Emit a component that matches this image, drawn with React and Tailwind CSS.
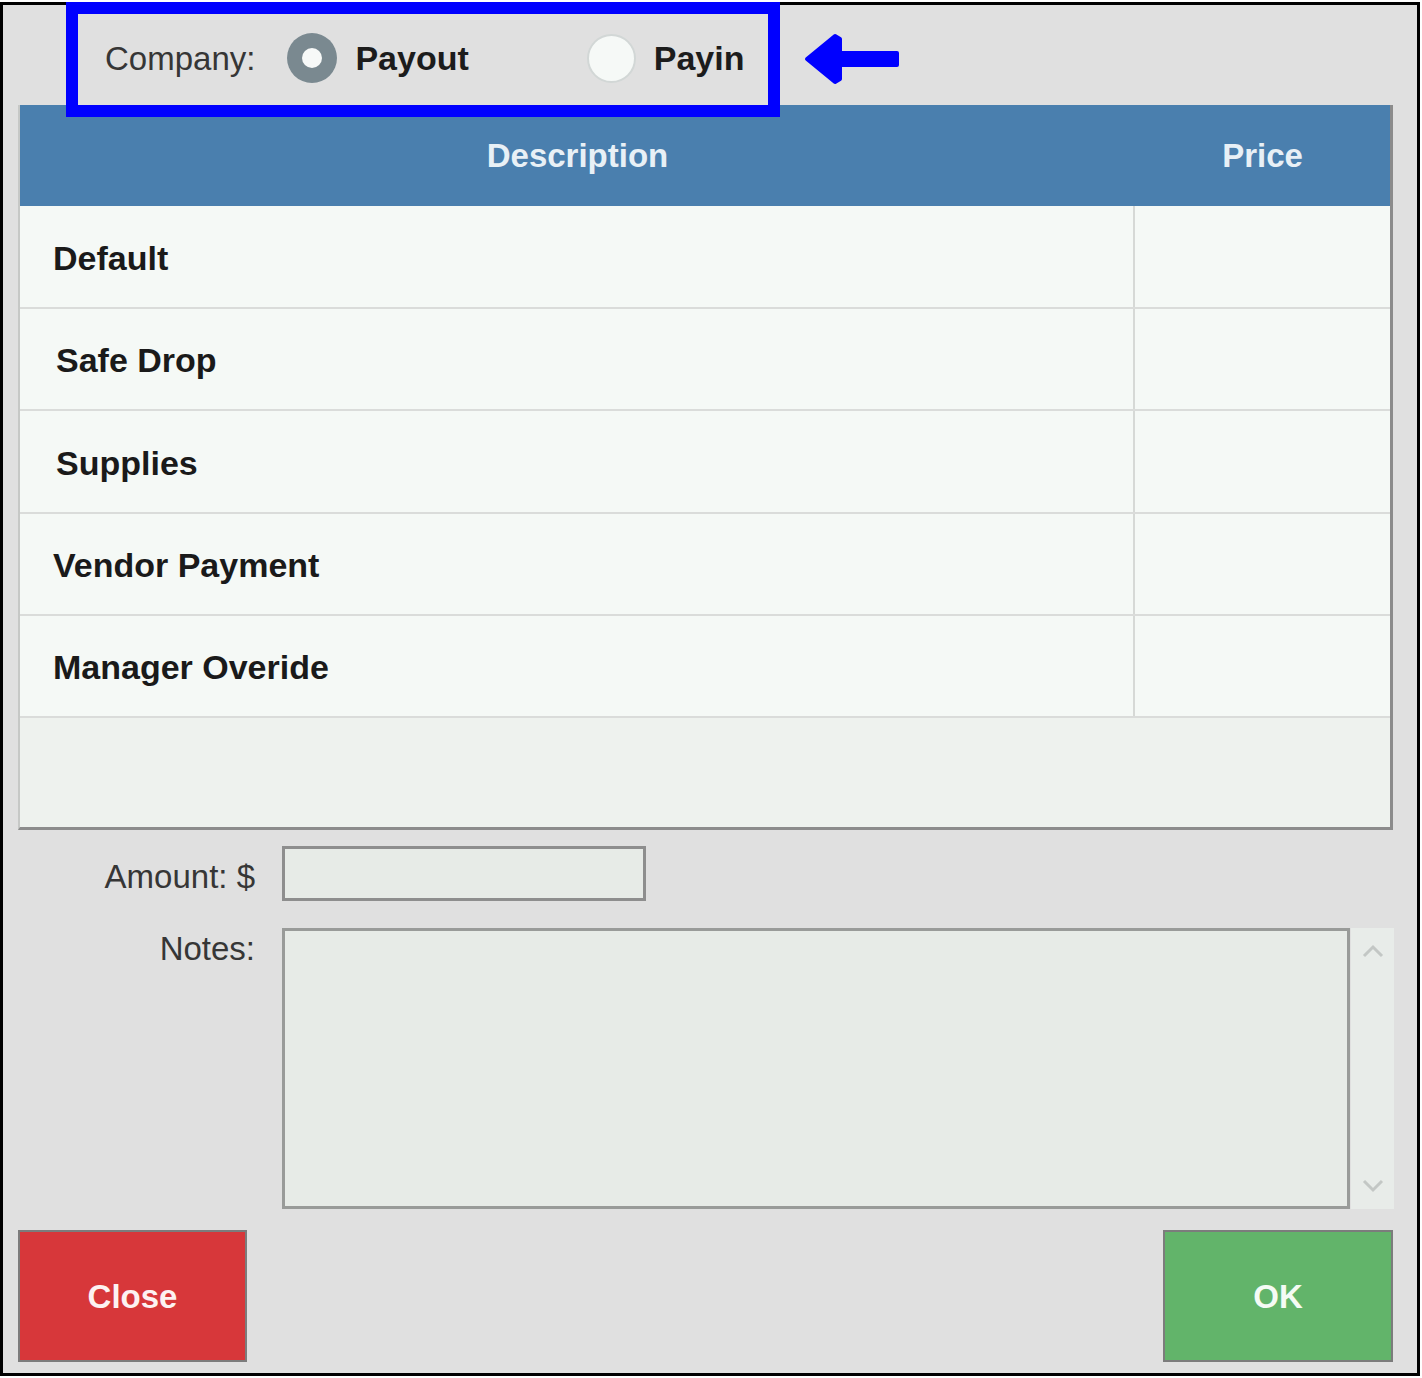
import React from "react";

const rows = [
  { label: "Default", pl: "pl-[33px]", h: "h-[103px]" },
  { label: "Safe Drop", pl: "pl-[36px]", h: "h-[102px]" },
  { label: "Supplies", pl: "pl-[36px]", h: "h-[103px]" },
  { label: "Vendor Payment", pl: "pl-[33px]", h: "h-[102px]" },
  { label: "Manager Overide", pl: "pl-[33px]", h: "h-[102px]" },
];

export default function App() {
  return (
    <div
      className="relative w-[1422px] h-[1378px] bg-white"
      style={{ fontFamily: '"Liberation Sans", Arial, sans-serif' }}
    >
      <div className="mt-[2px] w-[1420px] h-[1374px] border-[3px] border-black bg-[#e0e0e0] flex flex-col">
        {/* Company row */}
        <div className="h-[100px] shrink-0 flex items-center pt-[6px] pl-[102px]">
          <span className="text-[33px] text-[#363636] leading-none">Company:</span>
          <div className="ml-[32px] w-[50px] h-[50px] rounded-full bg-[#7a8990] flex items-center justify-center">
            <div className="w-[20px] h-[20px] rounded-full bg-[#f7f9f8]" />
          </div>
          <span className="ml-[18px] text-[34px] font-bold text-[#1c1c1c] leading-none">Payout</span>
          <div className="ml-[118px] w-[49px] h-[49px] rounded-full bg-[#f6f9f7] border-2 border-[#d2d7d6]" />
          <span className="ml-[18px] text-[34px] font-bold text-[#1c1c1c] leading-none">Payin</span>
        </div>

        {/* Table */}
        <div className="ml-[15px] w-[1375px] h-[725px] shrink-0 flex flex-col border-l-2 border-l-[#c6c8c6] border-r-[3px] border-r-[#8c8c8c] border-b-[3px] border-b-[#8c8c8c] bg-[#eef2ee]">
          <div className="h-[101px] shrink-0 flex bg-[#4a7fae] text-[#e8f0f6] text-[33px] font-bold">
            <div className="w-[1115px] flex items-center justify-center">Description</div>
            <div className="flex-1 flex items-center justify-center">Price</div>
          </div>
          {rows.map((r) => (
            <div key={r.label} className={`${r.h} shrink-0 flex bg-[#f5f9f6] border-b-2 border-b-[#dadcda]`}>
              <div className={`w-[1115px] flex items-center pt-[3px] border-r-2 border-r-[#d6d9d6] ${r.pl} text-[34px] font-bold text-[#1a1a1a]`}>
                {r.label}
              </div>
              <div className="flex-1" />
            </div>
          ))}
          <div className="flex-1" />
        </div>

        {/* Amount */}
        <div className="mt-[16px] flex items-center h-[55px] shrink-0">
          <div className="w-[252px] pt-[6px] text-right text-[33px] text-[#363636] leading-none">Amount: $</div>
          <div className="ml-[27px] w-[364px] h-[55px] bg-[#e7ebe7] border-[3px] border-[#8e8e8e]" />
        </div>

        {/* Notes */}
        <div className="mt-[27px] flex h-[281px] shrink-0">
          <div className="w-[252px] pt-[4px] text-right text-[33px] text-[#363636] leading-none">Notes:</div>
          <div className="ml-[27px] w-[1068px] h-[281px] bg-[#e7ebe7] border-[3px] border-[#999b99]" />
          <div className="ml-[1px] w-[43px] h-[281px] bg-[#e8ece9] flex flex-col items-center justify-between py-[16px]">
            <svg width="22" height="14" viewBox="0 0 22 14">
              <path d="M2 12 L11 3 L20 12" fill="none" stroke="#c3c7c5" strokeWidth="3" />
            </svg>
            <svg width="22" height="14" viewBox="0 0 22 14">
              <path d="M2 2 L11 11 L20 2" fill="none" stroke="#c3c7c5" strokeWidth="3" />
            </svg>
          </div>
        </div>

        {/* Buttons */}
        <div className="mt-[21px] ml-[15px] w-[1375px] flex justify-between">
          <div className="w-[229px] h-[132px] bg-[#d7373a] border-2 border-[#7c7c7c] flex items-center justify-center pt-[2px] text-[33px] font-bold text-[#fdf2f2]">
            Close
          </div>
          <div className="w-[230px] h-[132px] bg-[#62b46a] border-2 border-[#7c7c7c] flex items-center justify-center pt-[2px] text-[33px] font-bold text-[#f4fbf4]">
            OK
          </div>
        </div>
      </div>

      {/* Annotation: blue highlight box */}
      <div className="absolute left-[66px] top-0 w-[714px] h-[115px] border-[12px] border-[#0000ff]" />

      {/* Annotation: arrow */}
      <svg className="absolute left-[803px] top-[31px]" width="96" height="52" viewBox="0 0 96 52">
        <path
          d="M4 26 L32 3 L37 6 L37 20 L94 20 L94 32 L37 32 L37 46 L32 49 Z"
          fill="#0000ff"
          stroke="#0000ff"
          strokeWidth="4"
          strokeLinejoin="round"
        />
      </svg>
    </div>
  );
}
